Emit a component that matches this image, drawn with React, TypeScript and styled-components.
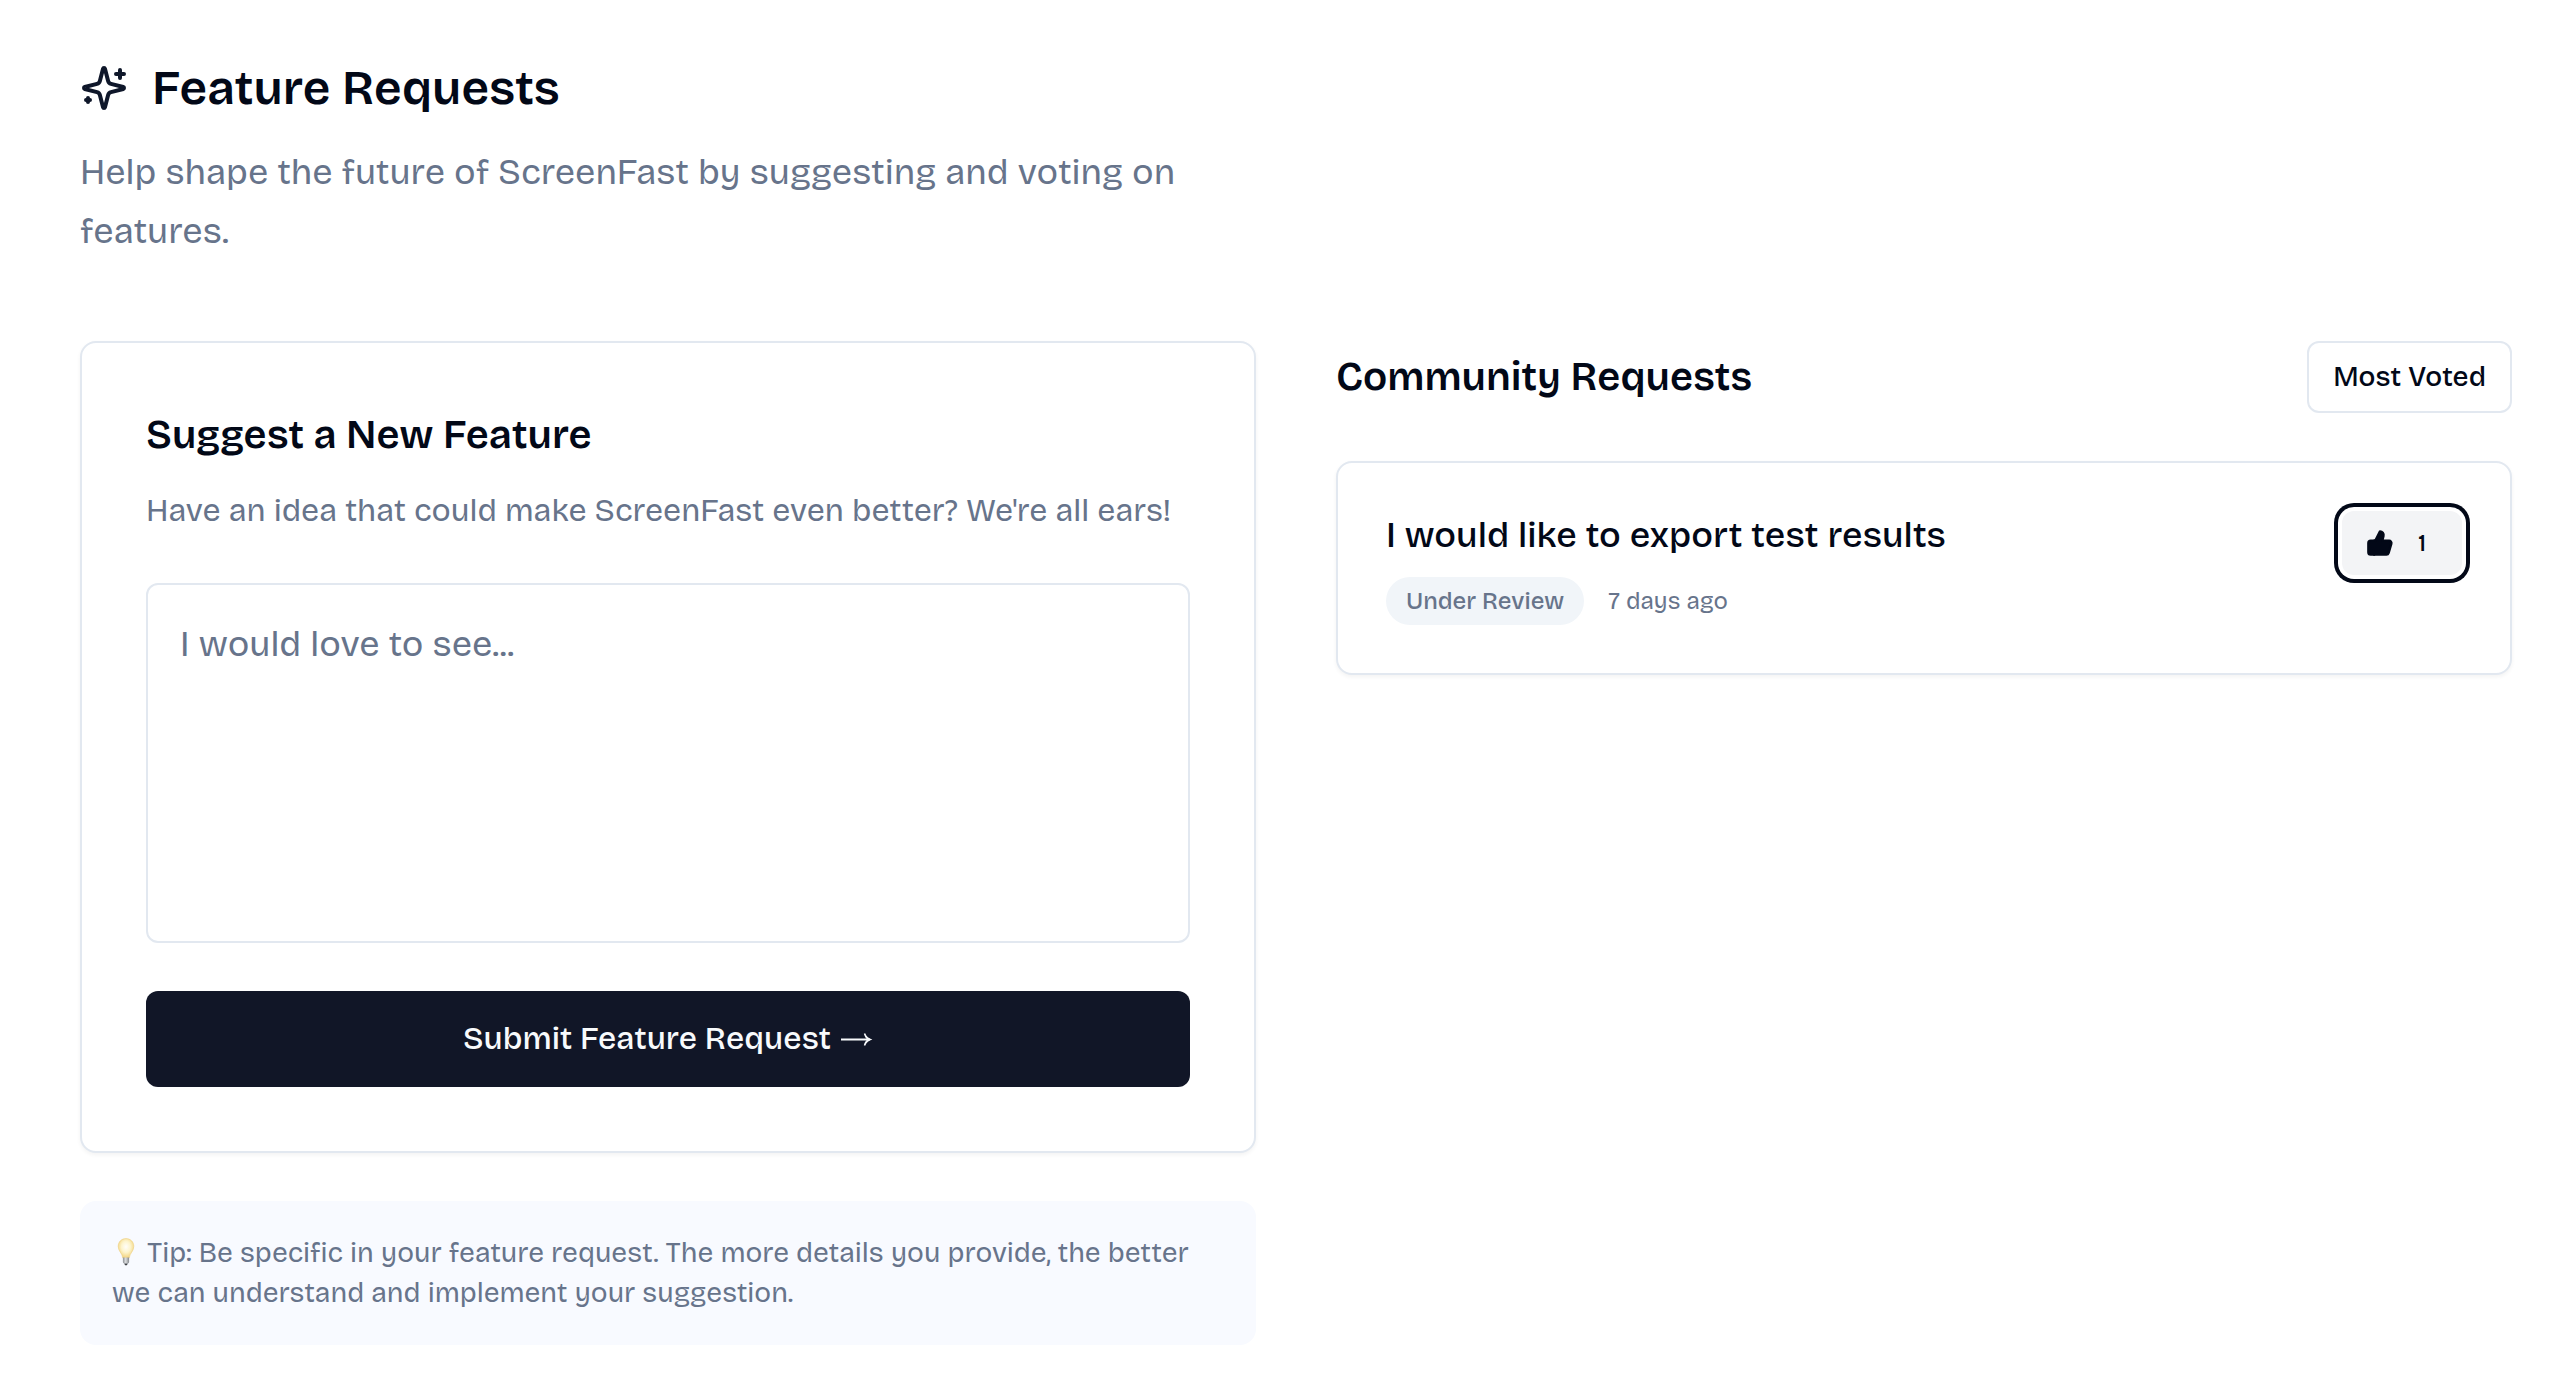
import React, { useState } from "react";
import styled, { createGlobalStyle, css } from "styled-components";

const color = {
  ink: "#020817",
  primary: "#0f172a",
  submit: "#111627",
  muted: "#67748b",
  border: "#e2e8f0",
  soft: "#f1f5f9",
  tip: "#f8faff",
  pressed: "#f3f4f6",
};

const GlobalStyle = createGlobalStyle`
  *, *::before, *::after { box-sizing: border-box; }
  body {
    margin: 0;
    background: #ffffff;
    color: ${color.ink};
    font-family: "Bricolage Grotesque", Inter, "Liberation Sans", sans-serif;
    -webkit-font-smoothing: antialiased;
  }
  h1, h2, h3, p { margin: 0; }
  button, textarea { font-family: inherit; }
`;

const Page = styled.main`
  padding: 64px 64px 40px 80px;
`;

const Header = styled.header`
  display: flex;
  flex-direction: column;
  gap: 31px;
  margin-bottom: 80px;
`;

const TitleRow = styled.div`
  display: flex;
  align-items: center;
  gap: 24px;
  color: ${color.primary};
`;

const PageTitle = styled.h1`
  color: ${color.ink};
  font-size: 48px;
  font-weight: 600;
  line-height: 48px;
`;

const Lead = styled.p`
  max-width: 1152px;
  color: ${color.muted};
  font-size: 36px;
  line-height: 59px;
`;

const Columns = styled.div`
  display: grid;
  grid-template-columns: repeat(2, minmax(0, 1fr));
  align-items: start;
  gap: 80px;
`;

const Column = styled.section`
  display: flex;
  flex-direction: column;
  gap: 48px;
`;

const cardSurface = css`
  background: #ffffff;
  border: 2px solid ${color.border};
  border-radius: 16px;
  box-shadow: 0 2px 4px rgba(0, 0, 0, 0.05);
`;

const FormCard = styled.form`
  ${cardSurface}
  display: flex;
  flex-direction: column;
  gap: 48px;
  padding: 64px;
`;

const FormIntro = styled.div`
  display: flex;
  flex-direction: column;
  gap: 24px;
`;

const SectionTitle = styled.h2`
  font-size: 40px;
  font-weight: 600;
  line-height: 56px;
`;

const Hint = styled.label`
  color: ${color.muted};
  font-size: 32px;
  line-height: 48px;
`;

const IdeaInput = styled.textarea`
  display: block;
  width: 100%;
  height: 360px;
  padding: 32px;
  border: 2px solid ${color.border};
  border-radius: 12px;
  background: #ffffff;
  color: ${color.ink};
  font-size: 36px;
  line-height: 56px;
  resize: none;
  outline: none;

  &::placeholder {
    color: ${color.muted};
    opacity: 1;
  }
`;

const SubmitButton = styled.button`
  display: flex;
  align-items: center;
  justify-content: center;
  gap: 8px;
  width: 100%;
  height: 96px;
  padding: 0 32px;
  border: 0;
  border-radius: 12px;
  background: ${color.submit};
  color: #f8fafc;
  font-size: 32px;
  font-weight: 500;
  line-height: 48px;
  cursor: pointer;
`;

const Tip = styled.p`
  padding: 32px;
  border-radius: 16px;
  background: ${color.tip};
  color: ${color.muted};
  font-size: 28px;
  line-height: 40px;
`;

const BulbArt = styled.svg`
  width: 28px;
  height: 28px;
  vertical-align: -4px;
`;

const ListHeader = styled.div`
  display: flex;
  align-items: center;
  justify-content: space-between;
`;

const SortButton = styled.button`
  height: 72px;
  padding: 0 24px;
  border: 2px solid ${color.border};
  border-radius: 12px;
  background: #ffffff;
  color: ${color.ink};
  font-size: 28px;
  font-weight: 500;
  line-height: 40px;
  cursor: pointer;
`;

const RequestCard = styled.article`
  ${cardSurface}
  display: flex;
  align-items: flex-start;
  justify-content: space-between;
  gap: 32px;
  padding: 48px;
`;

const RequestBody = styled.div`
  display: flex;
  flex-direction: column;
  gap: 16px;
`;

const RequestTitle = styled.h3`
  font-size: 36px;
  font-weight: 500;
  line-height: 50px;
`;

const Meta = styled.div`
  display: flex;
  align-items: center;
  gap: 24px;
  color: ${color.muted};
  font-size: 24px;
  line-height: 32px;
`;

const Badge = styled.span`
  padding: 8px 20px;
  border-radius: 24px;
  background: ${color.soft};
  font-weight: 500;
`;

const VoteButton = styled.button`
  display: flex;
  align-items: center;
  gap: 12px;
  height: 64px;
  padding: 0 24px;
  border: 0;
  border-radius: 12px;
  background: ${color.pressed};
  box-shadow: 0 0 0 4px #ffffff, 0 0 0 8px ${color.ink};
  color: ${color.ink};
  font-size: 24px;
  font-weight: 500;
  line-height: 32px;
  cursor: pointer;
`;

const VoteCount = styled.span`
  min-width: 32px;
  text-align: center;
`;

const SparklesIcon = () => (
  <svg width="48" height="48" viewBox="0 0 24 24" fill="none" stroke="currentColor" strokeWidth="2" strokeLinecap="round" strokeLinejoin="round" aria-hidden="true">
    <path d="M9.937 15.5A2 2 0 0 0 8.5 14.063l-6.135-1.582a.5.5 0 0 1 0-.962L8.5 9.936A2 2 0 0 0 9.937 8.5l1.582-6.135a.5.5 0 0 1 .963 0L14.063 8.5A2 2 0 0 0 15.5 9.937l6.135 1.581a.5.5 0 0 1 0 .964L15.5 14.063a2 2 0 0 0-1.437 1.437l-1.582 6.135a.5.5 0 0 1-.963 0z" />
    <path d="M20 3v4M22 5h-4M4 17v2M5 18H3" />
  </svg>
);

const ThumbIcon = () => (
  <svg width="28" height="28" viewBox="0 0 24 24" fill="currentColor" stroke="currentColor" strokeWidth="2" strokeLinecap="round" strokeLinejoin="round" aria-hidden="true">
    <path d="M7 10v12" />
    <path d="M15 5.88 14 10h5.83a2 2 0 0 1 1.92 2.56l-2.33 8A2 2 0 0 1 17.5 22H4a2 2 0 0 1-2-2v-8a2 2 0 0 1 2-2h2.76a2 2 0 0 0 1.79-1.11L12 2a3.13 3.13 0 0 1 3 3.88Z" />
  </svg>
);

const ArrowIcon = () => (
  <svg width="34" height="32" viewBox="0 0 34 32" fill="none" aria-hidden="true">
    <path d="M2 16.5H31" stroke="currentColor" strokeWidth="2" />
    <path d="M26.2 10.2C27.4 13.4 29.8 15.5 33.4 16.5C29.8 17.5 27.4 19.6 26.2 22.8L24.8 22.2C25.6 19.6 26.8 17.6 28.4 16.5C26.8 15.4 25.6 13.4 24.8 10.8Z" fill="currentColor" />
  </svg>
);

const Bulb = () => (
  <BulbArt viewBox="0 0 28 28" role="img" aria-label="Light bulb">
    <defs>
      <radialGradient id="bulb-glass" cx="0.5" cy="0.42" r="0.58">
        <stop offset="0" stopColor="#fffefa" />
        <stop offset="0.5" stopColor="#fdf4cc" />
        <stop offset="1" stopColor="#f2d27c" />
      </radialGradient>
      <linearGradient id="bulb-base" x1="0" x2="1" y1="0" y2="0">
        <stop offset="0" stopColor="#8d9094" />
        <stop offset="0.45" stopColor="#dcdee0" />
        <stop offset="1" stopColor="#85888c" />
      </linearGradient>
    </defs>
    <path d="M14 .6C9.500 .6 6.200 4 6.200 8.300C6.200 13.400 10.300 15 10.800 20H17.200C17.700 15 21.800 13.400 21.800 8.300C21.800 4 18.500 .6 14 .6Z" fill="url(#bulb-glass)" stroke="#edcf7e" strokeWidth=".6" />
    <path d="M10.900 19.600H17.100V24Q17.100 25.300 15.800 25.600H12.200Q10.900 25.300 10.900 24Z" fill="url(#bulb-base)" />
    <path d="M12.200 25.400H15.800L14.900 27.200H13.100Z" fill="#3f4247" />
  </BulbArt>
);

interface FeatureRequest {
  id: number;
  title: string;
  status: string;
  age: string;
  votes: number;
}

const requests: FeatureRequest[] = [
  { id: 1, title: "I would like to export test results", status: "Under Review", age: "7 days ago", votes: 1 },
];

export default function App() {
  const [idea, setIdea] = useState("");

  return (
    <>
      <GlobalStyle />
      <Page>
        <Header>
          <TitleRow>
            <SparklesIcon />
            <PageTitle>Feature Requests</PageTitle>
          </TitleRow>
          <Lead>Help shape the future of ScreenFast by suggesting and voting on features.</Lead>
        </Header>

        <Columns>
          <Column>
            <FormCard onSubmit={(event) => event.preventDefault()}>
              <FormIntro>
                <SectionTitle>Suggest a New Feature</SectionTitle>
                <Hint htmlFor="idea">Have an idea that could make ScreenFast even better? We're all ears!</Hint>
              </FormIntro>
              <IdeaInput
                id="idea"
                placeholder="I would love to see..."
                value={idea}
                onChange={(event) => setIdea(event.target.value)}
              />
              <SubmitButton type="submit">
                Submit Feature Request
                <ArrowIcon />
              </SubmitButton>
            </FormCard>
            <Tip>
              <Bulb /> Tip: Be specific in your feature request. The more details you provide, the better we can
              understand and implement your suggestion.
            </Tip>
          </Column>

          <Column>
            <ListHeader>
              <SectionTitle>Community Requests</SectionTitle>
              <SortButton type="button">Most Voted</SortButton>
            </ListHeader>
            {requests.map((request) => (
              <RequestCard key={request.id}>
                <RequestBody>
                  <RequestTitle>{request.title}</RequestTitle>
                  <Meta>
                    <Badge>{request.status}</Badge>
                    <span>{request.age}</span>
                  </Meta>
                </RequestBody>
                <VoteButton type="button" aria-pressed="true" aria-label={`Upvote, ${request.votes}`}>
                  <ThumbIcon />
                  <VoteCount>{request.votes}</VoteCount>
                </VoteButton>
              </RequestCard>
            ))}
          </Column>
        </Columns>
      </Page>
    </>
  );
}
